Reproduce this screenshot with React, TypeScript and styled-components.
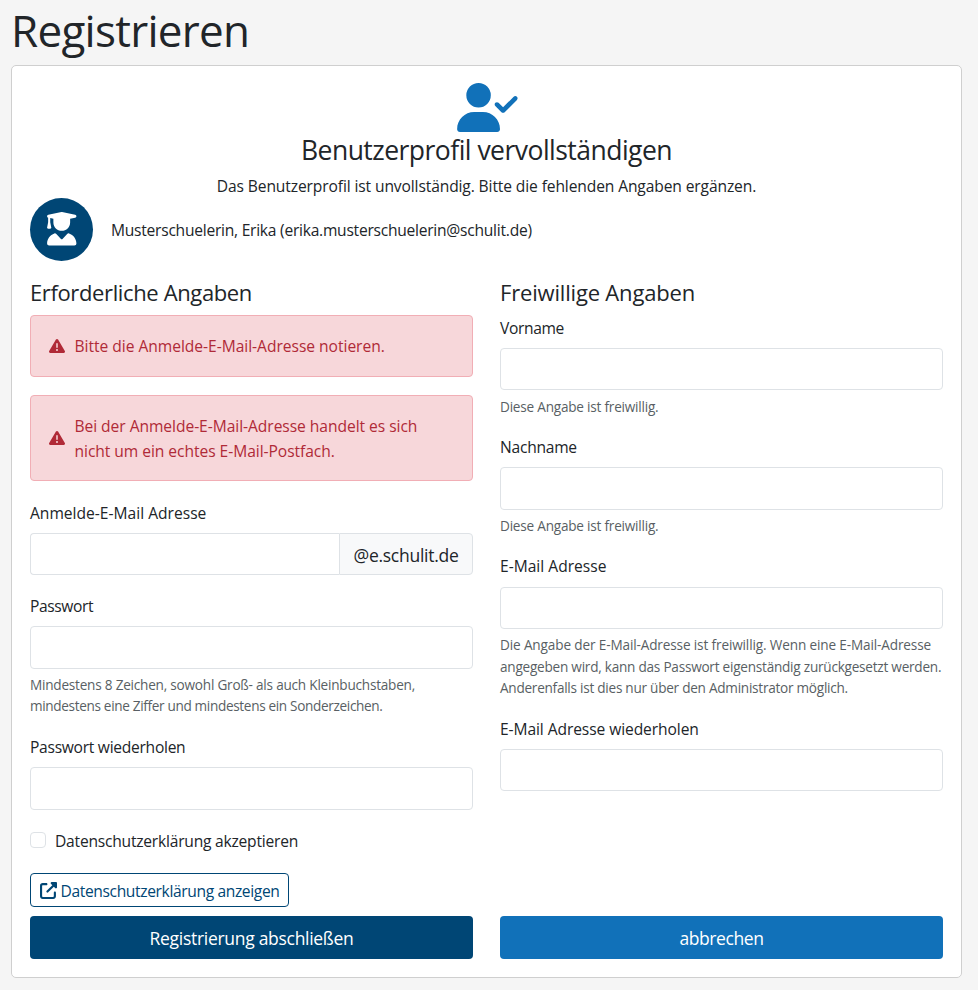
import React from 'react';
import styled, { createGlobalStyle } from 'styled-components';
import { FaUserCheck, FaUserGraduate, FaTriangleExclamation, FaUpRightFromSquare } from 'react-icons/fa6';

const GlobalStyle = createGlobalStyle`
  *, *::before, *::after { box-sizing: border-box; }
  body {
    margin: 0;
    background: #f5f5f5;
    color: #212529;
    font-family: 'Open Sans', 'Noto Sans', sans-serif;
    font-size: 15.6px;
    line-height: 25px;
  }
`;

const Page = styled.main`
  padding: 3px 16px 12px 11px;
`;

const PageTitle = styled.h1`
  margin: 0 0 8px;
  font-size: 44px;
  font-weight: 400;
  line-height: 54px;
  letter-spacing: -0.72px;
`;

const Card = styled.section`
  height: 913px;
  padding: 17px 18px 18px;
  border: 1px solid #cfcfcf;
  border-radius: 5px;
  background: #fff;
`;

const Intro = styled.header`
  display: flex;
  flex-direction: column;
  align-items: center;

  svg {
    display: block;
    width: 61.5px;
    height: 49px;
    margin-left: 2px;
    color: #1171b9;
  }
`;

const IntroTitle = styled.h2`
  margin: 2px 0 7px;
  font-size: 26.5px;
  font-weight: 400;
  line-height: 33px;
  letter-spacing: -0.52px;
`;

const Text = styled.span<{ $track?: number }>`
  letter-spacing: ${(p) => p.$track ?? 0}px;
  white-space: nowrap;
`;

const Profile = styled.div`
  display: flex;
  align-items: center;
  gap: 18px;
  margin: -1px 0 18px;

  ${Text} {
    padding-top: 2px;
  }
`;

const Avatar = styled.div`
  display: flex;
  align-items: center;
  justify-content: center;
  width: 63px;
  height: 63px;
  padding-bottom: 1px;
  border-radius: 50%;
  background: #004675;
  color: #fff;
`;

const Columns = styled.div`
  display: grid;
  grid-template-columns: 443px 443px;
  column-gap: 27px;
`;

const ColumnTitle = styled.h3<{ $track: number }>`
  margin: 0 0 9px;
  font-size: 22px;
  font-weight: 400;
  line-height: 27px;
  letter-spacing: ${(p) => p.$track}px;
`;

const AlertBox = styled.div`
  display: flex;
  align-items: center;
  gap: 9.5px;
  min-height: 62px;
  margin-bottom: 18px;
  padding: 17px 18px;
  border: 1px solid #f1aeb5;
  border-radius: 4px;
  background: #f7d7da;
  color: #b02a37;

  svg {
    flex: none;
  }
`;

const Field = styled.div`
  margin-bottom: 18px;
`;

const Label = styled.label<{ $track?: number }>`
  display: block;
  padding-top: 0.7px;
  margin-bottom: 7.3px;
  letter-spacing: ${(p) => p.$track ?? 0}px;
`;

const Input = styled.input`
  display: block;
  flex: 1;
  width: 100%;
  min-width: 0;
  height: 42.5px;
  margin: 0;
  padding: 7px 13px;
  border: 1px solid #dee2e6;
  border-radius: 4px;
  outline: none;
  background: #fff;
  font: inherit;
`;

const InputGroup = styled.div`
  display: flex;

  ${Input} {
    border-right: 0;
    border-radius: 4px 0 0 4px;
  }
`;

const Suffix = styled.span`
  display: flex;
  align-items: center;
  justify-content: center;
  width: 134px;
  padding-top: 2px;
  border: 1px solid #dee2e6;
  border-radius: 0 4px 4px 0;
  background: #f8f9fa;
  font-size: 17.5px;
  letter-spacing: -0.27px;
`;

const Help = styled.div`
  padding-top: 0.6px;
  margin: 4.5px 0 -0.6px;
  color: #595f64;
  font-size: 13.6px;
  line-height: 21.4px;

  ${Text} {
    display: block;
  }
`;

const CheckRow = styled.label`
  display: flex;
  align-items: center;
  gap: 9px;
  margin-bottom: 20px;

  ${Text} {
    padding-top: 1px;
    margin-bottom: -1px;
  }
`;

const Checkbox = styled.input`
  appearance: none;
  width: 16px;
  height: 16px;
  margin: 0;
  border: 1px solid #dee2e6;
  border-radius: 4px;
  background: #fff;
`;

const OutlineButton = styled.button`
  display: inline-flex;
  align-items: center;
  gap: 3.5px;
  width: 259px;
  height: 34px;
  padding: 0 9px;
  border: 1px solid #004675;
  border-radius: 4px;
  background: #fff;
  color: #004675;
  font: inherit;

  svg {
    flex: none;
  }

  ${Text} {
    padding-top: 2px;
  }
`;

const Actions = styled(Columns)`
  margin-top: 9px;
`;

const ActionButton = styled.button<{ $color: string; $track: number }>`
  height: 43px;
  padding: 2px 0 0;
  border: 0;
  border-radius: 4px;
  background: ${(p) => p.$color};
  color: #fff;
  font: inherit;
  font-size: 17.5px;
  letter-spacing: ${(p) => p.$track}px;
`;

const LeftColumn = styled.div`
  display: flex;
  flex-direction: column;
  align-items: stretch;
  height: 628px;

  ${OutlineButton} {
    align-self: flex-start;
    margin-top: auto;
  }
`;

const LoginAlerts = styled.div`
  padding-bottom: 0.9px;

  ${AlertBox}:last-child {
    height: 86px;

    ${Text} {
      padding-top: 1px;
    }
  }
`;

type HelpLine = { text: string; track: number };

function HelpText({ lines }: { lines: HelpLine[] }) {
  return (
    <Help>
      {lines.map((line) => (
        <Text key={line.text} $track={line.track}>{line.text}</Text>
      ))}
    </Help>
  );
}

const optional: HelpLine[] = [{ text: 'Diese Angabe ist freiwillig.', track: -0.22 }];

export default function App() {
  return (
    <>
      <GlobalStyle />
      <Page>
        <PageTitle>Registrieren</PageTitle>
        <Card>
          <Intro>
            <FaUserCheck />
            <IntroTitle>Benutzerprofil vervollständigen</IntroTitle>
            <Text $track={-0.12}>Das Benutzerprofil ist unvollständig. Bitte die fehlenden Angaben ergänzen.</Text>
          </Intro>
          <Profile>
            <Avatar><FaUserGraduate size={33.5} /></Avatar>
            <Text $track={-0.25}>Musterschuelerin, Erika (erika.musterschuelerin@schulit.de)</Text>
          </Profile>
          <Columns>
            <LeftColumn>
              <ColumnTitle $track={-0.37}>Erforderliche Angaben</ColumnTitle>
              <LoginAlerts>
                <AlertBox>
                  <FaTriangleExclamation size={16} />
                  <Text $track={-0.03}>Bitte die Anmelde-E-Mail-Adresse notieren.</Text>
                </AlertBox>
                <AlertBox>
                  <FaTriangleExclamation size={16} />
                  <Text $track={-0.05}>
                    Bei der Anmelde-E-Mail-Adresse handelt es sich
                    <br />
                    nicht um ein echtes E-Mail-Postfach.
                  </Text>
                </AlertBox>
              </LoginAlerts>
              <Field>
                <Label htmlFor="login">Anmelde-E-Mail Adresse</Label>
                <InputGroup>
                  <Input id="login" />
                  <Suffix>@e.schulit.de</Suffix>
                </InputGroup>
              </Field>
              <Field>
                <Label htmlFor="password" $track={-0.4}>Passwort</Label>
                <Input id="password" type="password" />
                <HelpText
                  lines={[
                    { text: 'Mindestens 8 Zeichen, sowohl Groß- als auch Kleinbuchstaben,', track: -0.225 },
                    { text: 'mindestens eine Ziffer und mindestens ein Sonderzeichen.', track: -0.34 },
                  ]}
                />
              </Field>
              <Field>
                <Label htmlFor="password2" $track={-0.28}>Passwort wiederholen</Label>
                <Input id="password2" type="password" />
              </Field>
              <CheckRow>
                <Checkbox type="checkbox" />
                <Text $track={-0.22}>Datenschutzerklärung akzeptieren</Text>
              </CheckRow>
              <OutlineButton type="button">
                <FaUpRightFromSquare size={17} />
                <Text $track={-0.37}>Datenschutzerklärung anzeigen</Text>
              </OutlineButton>
            </LeftColumn>
            <div>
              <ColumnTitle $track={-0.18}>Freiwillige Angaben</ColumnTitle>
              <Field>
                <Label htmlFor="first" $track={-0.35}>Vorname</Label>
                <Input id="first" />
                <HelpText lines={optional} />
              </Field>
              <Field>
                <Label htmlFor="last" $track={-0.25}>Nachname</Label>
                <Input id="last" />
                <HelpText lines={optional} />
              </Field>
              <Field>
                <Label htmlFor="mail">E-Mail Adresse</Label>
                <Input id="mail" />
                <HelpText
                  lines={[
                    { text: 'Die Angabe der E-Mail-Adresse ist freiwillig. Wenn eine E-Mail-Adresse', track: -0.14 },
                    { text: 'angegeben wird, kann das Passwort eigenständig zurückgesetzt werden.', track: -0.24 },
                    { text: 'Anderenfalls ist dies nur über den Administrator möglich.', track: -0.26 },
                  ]}
                />
              </Field>
              <Field>
                <Label htmlFor="mail2" $track={-0.09}>E-Mail Adresse wiederholen</Label>
                <Input id="mail2" />
              </Field>
            </div>
          </Columns>
          <Actions>
            <ActionButton type="submit" $color="#004675" $track={-0.29}>Registrierung abschließen</ActionButton>
            <ActionButton type="button" $color="#1171b9" $track={-0.42}>abbrechen</ActionButton>
          </Actions>
        </Card>
      </Page>
    </>
  );
}
